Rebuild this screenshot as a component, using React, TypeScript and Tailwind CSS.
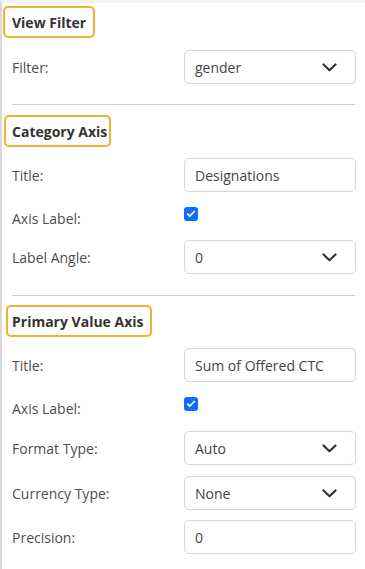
import React from 'react';
import { Check } from 'lucide-react';

const font = { fontFamily: '"Open Sans", "Noto Sans", sans-serif' };

function Heading({ text, className }: { text: string; className: string }) {
  return (
    <div className={`flex ${className}`}>
      <div className="h-[32px] flex items-center border-2 border-[#efb234] rounded-[5px] text-[14px] font-bold text-[#333] whitespace-nowrap">
        {text}
      </div>
    </div>
  );
}

function Row({ label, className, children }: { label: string; className: string; children: React.ReactNode }) {
  return (
    <div className={`flex items-center pl-[10px] ${className}`}>
      <div className="w-[172px] text-[14px] text-[#4d4d4d]">{label}</div>
      {children}
    </div>
  );
}

function Chevron() {
  return (
    <svg width="15" height="9" viewBox="0 0 15 9" fill="none">
      <path d="M1.5 1.5 L7.5 7.2 L13.5 1.5" stroke="#333" strokeWidth="2.2" strokeLinecap="round" strokeLinejoin="round" />
    </svg>
  );
}

function Select({ value }: { value: string }) {
  return (
    <div className="w-[172px] h-[34px] flex items-center justify-between border border-[#d6d6d6] rounded-[5px] pl-[10px] pr-[18px] text-[14px] text-[#444]">
      <span>{value}</span>
      <Chevron />
    </div>
  );
}

function Input({ value }: { value: string }) {
  return (
    <div className="w-[172px] h-[34px] flex items-center border border-[#d6d6d6] rounded-[5px] pl-[10px] text-[14px] text-[#444] whitespace-nowrap">
      {value}
    </div>
  );
}

function CheckRow({ className }: { className: string }) {
  return (
    <div className={`flex items-start pl-[10px] h-[22px] ${className}`}>
      <div className="w-[172px] mt-[2px] leading-[20px] text-[14px] text-[#4d4d4d]">Axis Label:</div>
      <div className="w-[14px] h-[14px] rounded-[3px] bg-[#0d6efd] flex items-center justify-center">
        <Check size={10} strokeWidth={4} className="text-white" />
      </div>
    </div>
  );
}

function Divider({ className }: { className: string }) {
  return <div className={`ml-[10px] w-[343px] h-px bg-[#cfcfcf] ${className}`} />;
}

export default function App() {
  return (
    <div style={font} className="w-[365px] h-[569px] bg-white border-t-[3px] border-t-[#f3f3f3] border-l-2 border-l-[#d9d9d9] overflow-hidden">
      <Heading text="View Filter" className="mt-[3px] ml-[1px] [&>div]:px-[7px]" />
      <Row label="Filter:" className="mt-[12px]">
        <Select value="gender" />
      </Row>
      <Divider className="mt-[20px]" />

      <Heading text="Category Axis" className="mt-[10px] ml-[2px] [&>div]:pl-[6px] [&>div]:pr-[2px]" />
      <Row label="Title:" className="mt-[11px]">
        <Input value="Designations" />
      </Row>
      <CheckRow className="mt-[15px]" />
      <Row label="Label Angle:" className="mt-[11px]">
        <Select value="0" />
      </Row>
      <Divider className="mt-[21px]" />

      <Heading text="Primary Value Axis" className="mt-[9px] ml-[4px] [&>div]:pl-[4px] [&>div]:pr-[6px]" />
      <Row label="Title:" className="mt-[11px]">
        <Input value="Sum of Offered CTC" />
      </Row>
      <CheckRow className="mt-[15px]" />
      <Row label="Format Type:" className="mt-[12px]">
        <Select value="Auto" />
      </Row>
      <Row label="Currency Type:" className="mt-[11px]">
        <Select value="None" />
      </Row>
      <Row label="Precision:" className="mt-[10px]">
        <Input value="0" />
      </Row>
    </div>
  );
}
